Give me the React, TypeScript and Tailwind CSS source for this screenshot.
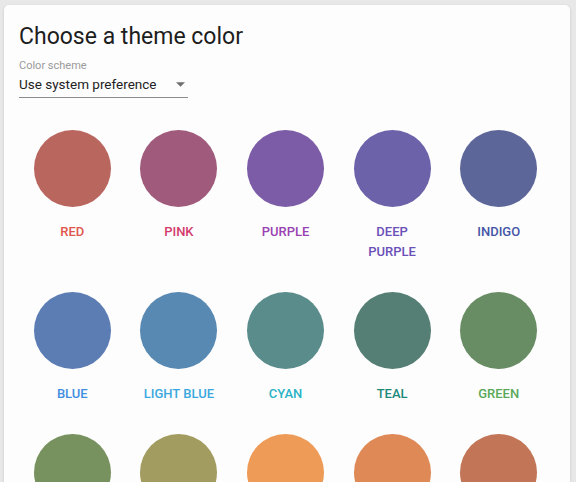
import React from "react";

type Swatch = { name: string; circle: string; text: string };

// muted circle fill + saturated label colour
const swatches: Swatch[] = [
  { name: "Red", circle: "bg-[#b9665f]", text: "text-[#e0564c]" },
  { name: "Pink", circle: "bg-[#a05a7b]", text: "text-[#d33a6c]" },
  { name: "Purple", circle: "bg-[#7c5ca6]", text: "text-[#9a42b2]" },
  { name: "Deep Purple", circle: "bg-[#6b62a9]", text: "text-[#6a50b8]" },
  { name: "Indigo", circle: "bg-[#5d6699]", text: "text-[#4455a6]" },
  { name: "Blue", circle: "bg-[#5c7db4]", text: "text-[#3f8ee0]" },
  { name: "Light Blue", circle: "bg-[#5789b2]", text: "text-[#3aa8de]" },
  { name: "Cyan", circle: "bg-[#5a8c8b]", text: "text-[#2ab2c6]" },
  { name: "Teal", circle: "bg-[#557e75]", text: "text-[#1c897b]" },
  { name: "Green", circle: "bg-[#688c63]", text: "text-[#5aa95a]" },
  { name: "Light Green", circle: "bg-[#78925f]", text: "text-[#7cb342]" },
  { name: "Lime", circle: "bg-[#a39c60]", text: "text-[#b5b82a]" },
  { name: "Amber", circle: "bg-[#ef9b58]", text: "text-[#f2a429]" },
  { name: "Orange", circle: "bg-[#df8957]", text: "text-[#ef8a2a]" },
  { name: "Deep Orange", circle: "bg-[#c27657]", text: "text-[#e8643a]" },
];

const ColorOption: React.FC<{ swatch: Swatch }> = ({ swatch }) => (
  <div className="flex flex-col items-center pb-[30px]">
    <div className={`h-[77px] w-[77px] rounded-full ${swatch.circle}`} />
    <div
      className={`mt-[15px] w-[76px] text-center text-[13px] font-medium uppercase leading-[20px] ${swatch.text}`}
    >
      {swatch.name}
    </div>
  </div>
);

export default function App() {
  return (
    <div
      className="h-[482px] overflow-hidden bg-[#e8e8e8] pt-[5px] pl-[4px] pr-[6px]"
      style={{ fontFamily: "Roboto, 'Noto Sans', sans-serif" }}
    >
      <div className="h-[490px] rounded-[5px] bg-[#fdfdfd] px-[15px] pt-[18px] shadow-[0_1px_3px_rgba(0,0,0,0.15)]">
        <h1 className="text-[23px] leading-[28px] font-normal text-[#1d1d1d]">
          Choose a theme color
        </h1>

        <div className="mt-[8px] w-[169px]">
          <div className="text-[11px] leading-[13px] text-[#9a9a9a]">Color scheme</div>
          <div className="flex h-[26px] items-center justify-between border-b border-[#8c8c8c]">
            <span className="text-[13.5px] text-[#222]">Use system preference</span>
            <svg className="mr-[3px] h-[5px] w-[9px]" viewBox="0 0 10 5" fill="#6f6f6f">
              <path d="M0 0h10L5 5z" />
            </svg>
          </div>
        </div>

        <div className="mt-[32px] grid w-[533px] grid-cols-5">
          {swatches.map((s) => (
            <ColorOption key={s.name} swatch={s} />
          ))}
        </div>
      </div>
    </div>
  );
}
